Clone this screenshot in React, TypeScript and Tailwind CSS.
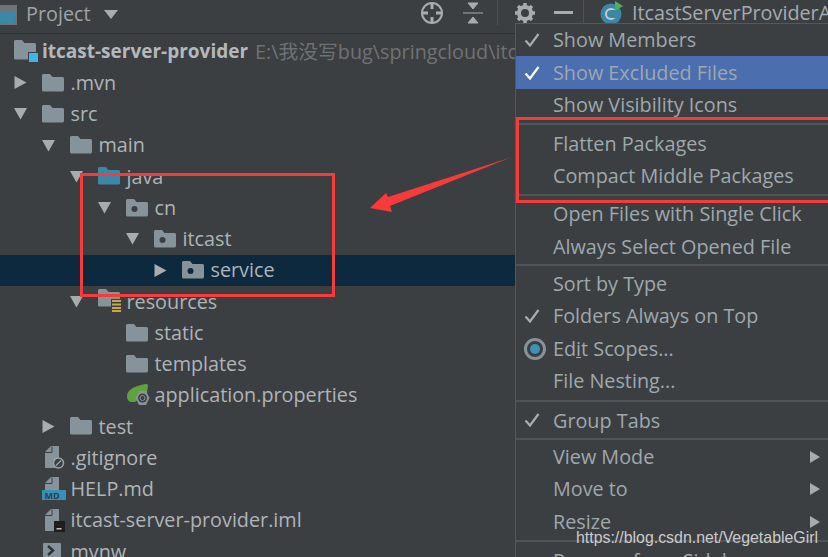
const FOLDER = "M0 1.5C0 .7.7 0 1.5 0H8l2.5 3h10c.8 0 1.5.7 1.5 1.5V16c0 .8-.7 1.5-1.5 1.5h-19C.7 17.5 0 16.8 0 16z";

const Folder = ({ color = "#87939a", dot = "" }: { color?: string; dot?: string }) => (
  <svg width="23" height="18" viewBox="0 0 23 18">
    <path d={FOLDER} fill={color} />
    {dot && <circle cx="8.5" cy="10" r="3" fill={dot} />}
  </svg>
);

const Arrow = ({ open, color = "#a8acae" }: { open?: boolean; color?: string }) => (
  <svg width="13" height="13" viewBox="0 0 13 13">
    <path d={open ? "M0 1h13L6.5 12.5z" : "M.5 0 12.5 6.5 .5 13z"} fill={color} />
  </svg>
);

const FileBase = ({ children }: { children?: React.ReactNode }) => (
  <svg width="24" height="25" viewBox="0 0 24 25">
    <path d="M9 1h7c.6 0 1 .4 1 1v20c0 .6-.4 1-1 1H4c-.6 0-1-.4-1-1V7z" fill="#87939a" />
    <path d="M3 7.500h7V1.500" fill="none" stroke="#3c3f41" strokeWidth="1" />
    {children}
  </svg>
);

const GitIgnoreIcon = () => (
  <FileBase>
    <circle cx="16.500" cy="18" r="5" fill="#3c3f41" stroke="#9aa3a8" strokeWidth="1.500" />
    <path d="M14 20.500 19 15.500" stroke="#9aa3a8" strokeWidth="1.500" />
  </FileBase>
);

const MdIcon = () => (
  <svg width="24" height="25" viewBox="0 0 24 25">
    <path d="M9 1h7c.6 0 1 .4 1 1v14H3V7z" fill="#87939a" />
    <path d="M3 7.500h7V1.500" fill="none" stroke="#3c3f41" strokeWidth="1" />
    <rect x="0" y="14" width="24" height="10" fill="#3b8fb5" />
    <text x="2.500" y="22.500" fontSize="9" fontWeight="700" fill="#27404e" fontFamily="'Open Sans', sans-serif">
      MD
    </text>
  </svg>
);

const ImlIcon = () => (
  <FileBase>
    <rect x="12" y="13" width="11" height="11" fill="#1e1e1e" />
    <rect x="14.500" y="20" width="5" height="1.500" fill="#c0c0c0" />
  </FileBase>
);

const SpringIcon = () => (
  <svg width="25" height="24" viewBox="0 0 25 24">
    <path d="M1 13C1 7 8 3 20 1c1 0 2 .5 2 1.500L21 10 9 19H6c-3 0-5-2-5-6z" fill="#62a03f" />
    <path d="M13 8h7l3.500 7-3.500 7h-7l-3.500-7z" fill="#87939a" />
    <circle cx="16.500" cy="15" r="4.500" fill="#3c3f41" />
    <circle cx="16.500" cy="15" r="2.500" fill="none" stroke="#87939a" strokeWidth="1" />
  </svg>
);

const ResourcesIcon = () => (
  <svg width="24" height="25" viewBox="0 0 24 25">
    <path d={FOLDER} fill="#87939a" />
    <rect x="13" y="10" width="11" height="13" fill="#3c3f41" />
    <path d="M14 12h9M14 15.500h9M14 19h9M14 22h9" stroke="#c9a54a" strokeWidth="2" />
  </svg>
);

const ModuleIcon = () => (
  <svg width="24" height="24" viewBox="0 0 24 24">
    <path d="M0 1.500C0 .7.7 0 1.500 0H8l2.500 3h10c.8 0 1.500.7 1.500 1.500V18c0 .8-.7 1.500-1.500 1.500h-19C.7 19.500 0 18.800 0 18z" fill="#87939a" />
    <rect x="14" y="12" width="10" height="10" fill="#3c3f41" />
    <rect x="15" y="13" width="9" height="9" fill="#3fb4e6" />
  </svg>
);

const ShellIcon = () => (
  <svg width="20" height="18" viewBox="0 0 20 18">
    <rect x="1" y="1" width="18" height="17" rx="1" fill="#87939a" />
    <path d="M6 4l5 4.500-5 4.500" fill="none" stroke="#2f3234" strokeWidth="2.500" />
  </svg>
);

type Row = {
  label: string;
  depth: number;
  arrow?: "open" | "closed";
  icon: React.ReactNode;
  selected?: boolean;
};

const rows: Row[] = [
  { label: ".mvn", depth: 0, arrow: "closed", icon: <Folder /> },
  { label: "src", depth: 0, arrow: "open", icon: <Folder /> },
  { label: "main", depth: 1, arrow: "open", icon: <Folder /> },
  { label: "java", depth: 2, arrow: "open", icon: <Folder color="#3d87a6" /> },
  { label: "cn", depth: 3, arrow: "open", icon: <Folder dot="#3c3f41" /> },
  { label: "itcast", depth: 4, arrow: "open", icon: <Folder dot="#3c3f41" /> },
  { label: "service", depth: 5, arrow: "closed", icon: <Folder dot="#0d293e" />, selected: true },
  { label: "resources", depth: 2, arrow: "open", icon: <ResourcesIcon /> },
  { label: "static", depth: 3, icon: <Folder /> },
  { label: "templates", depth: 3, icon: <Folder /> },
  { label: "application.properties", depth: 3, icon: <SpringIcon /> },
  { label: "test", depth: 1, arrow: "closed", icon: <Folder /> },
  { label: ".gitignore", depth: 0, icon: <GitIgnoreIcon /> },
  { label: "HELP.md", depth: 0, icon: <MdIcon /> },
  { label: "itcast-server-provider.iml", depth: 0, icon: <ImlIcon /> },
  { label: "mvnw", depth: 0, icon: <ShellIcon /> },
];

type MenuEntry =
  | { sep: string }
  | { sep?: undefined; label: React.ReactNode; check?: boolean; radio?: boolean; active?: boolean; sub?: boolean };

const menu: MenuEntry[] = [
  { label: "Show Members", check: true },
  { label: "Show Excluded Files", check: true, active: true },
  { label: "Show Visibility Icons" },
  { sep: "h-[6px] flex items-center" },
  { label: "Flatten Packages" },
  { label: "Compact Middle Packages" },
  { sep: "h-[6px] flex items-center" },
  { label: "Open Files with Single Click" },
  { label: "Always Select Opened File" },
  { sep: "h-[5px] flex items-center" },
  { label: "Sort by Type" },
  { label: "Folders Always on Top", check: true },
  {
    label: (
      <>
        Ed<span className="underline">i</span>t Scopes...
      </>
    ),
    radio: true,
  },
  { label: "File Nesting..." },
  { sep: "h-[7px] flex items-center" },
  { label: "Group Tabs", check: true },
  { sep: "h-[4px] flex items-center" },
  { label: "View Mode", sub: true },
  { label: "Move to", sub: true },
  { label: "Resize", sub: true },
  { sep: "h-[7px] flex items-center" },
  { label: "Remove from Sidebar" },
];

const Check = ({ color }: { color: string }) => (
  <svg width="16" height="14" viewBox="0 0 16 14">
    <path d="M1.500 7.500 6 12.500 14.500 1" fill="none" stroke={color} strokeWidth="2.200" />
  </svg>
);

const Toolbar = () => (
  <div className="h-[34px] w-[515px] pb-[5px] flex items-center border-b border-[#323232]">
    <svg width="18" height="21" viewBox="0 0 18 21" className="shrink-0">
      <rect x="-3" y="1" width="20" height="20" fill="#6d7478" />
      <rect x="-1" y="7" width="16" height="12" fill="#3d87a6" />
    </svg>
    <span className="ml-2 text-[19.8px] text-[#9ea4a8]">Project</span>
    <svg width="14" height="9" viewBox="0 0 14 9" className="ml-[13px]">
      <path d="M0 0h14L7 9z" fill="#a8acae" />
    </svg>
  </div>
);

const HeaderActions = () => (
  <div className="absolute left-[420px] top-0 h-[25px] w-[408px] flex items-center overflow-hidden text-[19.8px] text-[#a5abaf]">
    <svg width="24" height="24" viewBox="0 0 24 24" className="shrink-0">
      <circle cx="12" cy="12" r="10" fill="none" stroke="#a8acae" strokeWidth="2" />
      <path d="M12 2v6M12 16v6M2 12h6M16 12h6" stroke="#a8acae" strokeWidth="3" />
    </svg>
    <svg width="20" height="22" viewBox="0 0 20 22" className="ml-[19px] shrink-0">
      <path d="M5 1h10l-5 6zM5 21h10l-5-6zM0 11h20" fill="#a8acae" stroke="#a8acae" strokeWidth="1" />
    </svg>
    <div className="ml-[14px] h-[28px] w-px bg-[#4e5052] shrink-0" />
    <svg width="22" height="22" viewBox="0 0 22 22" className="ml-[16px] shrink-0">
      <circle cx="11" cy="11" r="6" fill="none" stroke="#a8acae" strokeWidth="4" />
      <path d="M11 1v4M11 17v4M1 11h4M17 11h4M4 4l3 3M15 15l3 3M18 4l-3 3M7 15l-3 3" stroke="#a8acae" strokeWidth="3.500" />
    </svg>
    <div className="ml-[18px] h-[3px] w-[19px] bg-[#a8acae] shrink-0" />
    <div className="ml-[10px] h-[28px] w-px bg-[#4e5052] shrink-0" />
    <svg width="24" height="24" viewBox="0 0 24 24" className="ml-[16px] shrink-0">
      <circle cx="11" cy="13" r="10.500" fill="#3d87a6" />
      <circle cx="11" cy="13" r="5" fill="none" stroke="#c6ccd0" strokeWidth="2" />
      <rect x="12" y="9" width="6" height="8" fill="#3d87a6" />
      <path d="M15 0l8 5-8 5z" fill="#4faf5a" />
    </svg>
    <span className="ml-[8px] whitespace-nowrap">ItcastServerProviderApplication</span>
  </div>
);

const Tree = () => (
  <div className="w-[515px] text-[19.8px] text-[#aeb4b8]">
    <div className="h-[33px] pl-[14px] pt-[2px] flex items-center whitespace-nowrap overflow-hidden">
      <span className="w-[28px] shrink-0">
        <ModuleIcon />
      </span>
      <span className="font-bold text-[19px] text-[#b4b8bb]">itcast-server-provider</span>
      <span className="ml-[7px] text-[#6f7274]" style={{ fontFamily: "'Open Sans','Noto Sans CJK SC',sans-serif" }}>
        E:\我没写bug\springcloud\itcast-server-provider
      </span>
    </div>
    {rows.map((r) => (
      <div
        key={r.label}
        className={r.selected ? "h-[31.25px] flex items-center bg-[#0d293e]" : "h-[31.25px] flex items-center"}
        style={{ paddingLeft: 14 + r.depth * 28 }}
      >
        <span className="w-[28px] shrink-0 flex">{r.arrow && <Arrow open={r.arrow === "open"} />}</span>
        <span className="w-[28.5px] shrink-0 flex">{r.icon}</span>
        <span className="whitespace-nowrap">{r.label}</span>
      </div>
    ))}
  </div>
);

const Menu = () => (
  <div className="absolute left-[515px] top-[23px] w-[313px] h-[534px] overflow-hidden bg-[#3c3f41] border-l border-t border-[#555759] text-[19.8px] text-[#9fa8ad]">
    {menu.map((m, i) =>
      m.sep ? (
        <div key={i} className={m.sep}>
          <div className="h-[2px] w-full bg-[#515456]" />
        </div>
      ) : (
        <div key={i} className={m.active ? "h-[32.4px] flex items-center bg-[#4b6eaf]" : "h-[32.4px] flex items-center"}>
          <span className="w-[37px] pl-[8px] shrink-0 flex">
            {m.check && <Check color={m.active ? "#ffffff" : "#a8acae"} />}
            {m.radio && (
              <span className="h-[22px] w-[22px] rounded-full border-[3px] border-[#87939a] flex items-center justify-center">
                <span className="h-[10px] w-[10px] rounded-full bg-[#3d92b8]" />
              </span>
            )}
          </span>
          <span className="whitespace-nowrap">{m.label}</span>
          {m.sub && (
            <span className="ml-auto mr-[8px] flex">
              <svg width="10" height="12" viewBox="0 0 10 12">
                <path d="M0 0 10 6 0 12z" fill="#a8acae" />
              </svg>
            </span>
          )}
        </div>
      )
    )}
  </div>
);

export default function App() {
  return (
    <div
      className="relative w-[828px] h-[557px] overflow-hidden bg-[#3c3f41]"
      style={{ fontFamily: "'Open Sans', sans-serif" }}
    >
      <Toolbar />
      <Tree />
      <HeaderActions />
      <Menu />
      <div className="absolute left-[80px] top-[173px] w-[255px] h-[124px] border-[3px] border-[#f73a3a]" />
      <div className="absolute left-[516px] top-[117px] w-[320px] h-[86px] border-[3px] border-[#f73a3a]" />
      <svg className="absolute left-[360px] top-[150px]" width="160" height="70" viewBox="0 0 160 70">
        <path d="M152 7 28 47 26 43 10 58 32 62 30 56z" fill="#f73a3a" />
      </svg>
      <span className="absolute left-[576px] top-[528px] text-[15.9px] leading-[20px] text-[#c9cbcc] whitespace-nowrap" style={{ fontFamily: "'Liberation Sans', sans-serif" }}>
        https://blog.csdn.net/VegetableGirl
      </span>
    </div>
  );
}
